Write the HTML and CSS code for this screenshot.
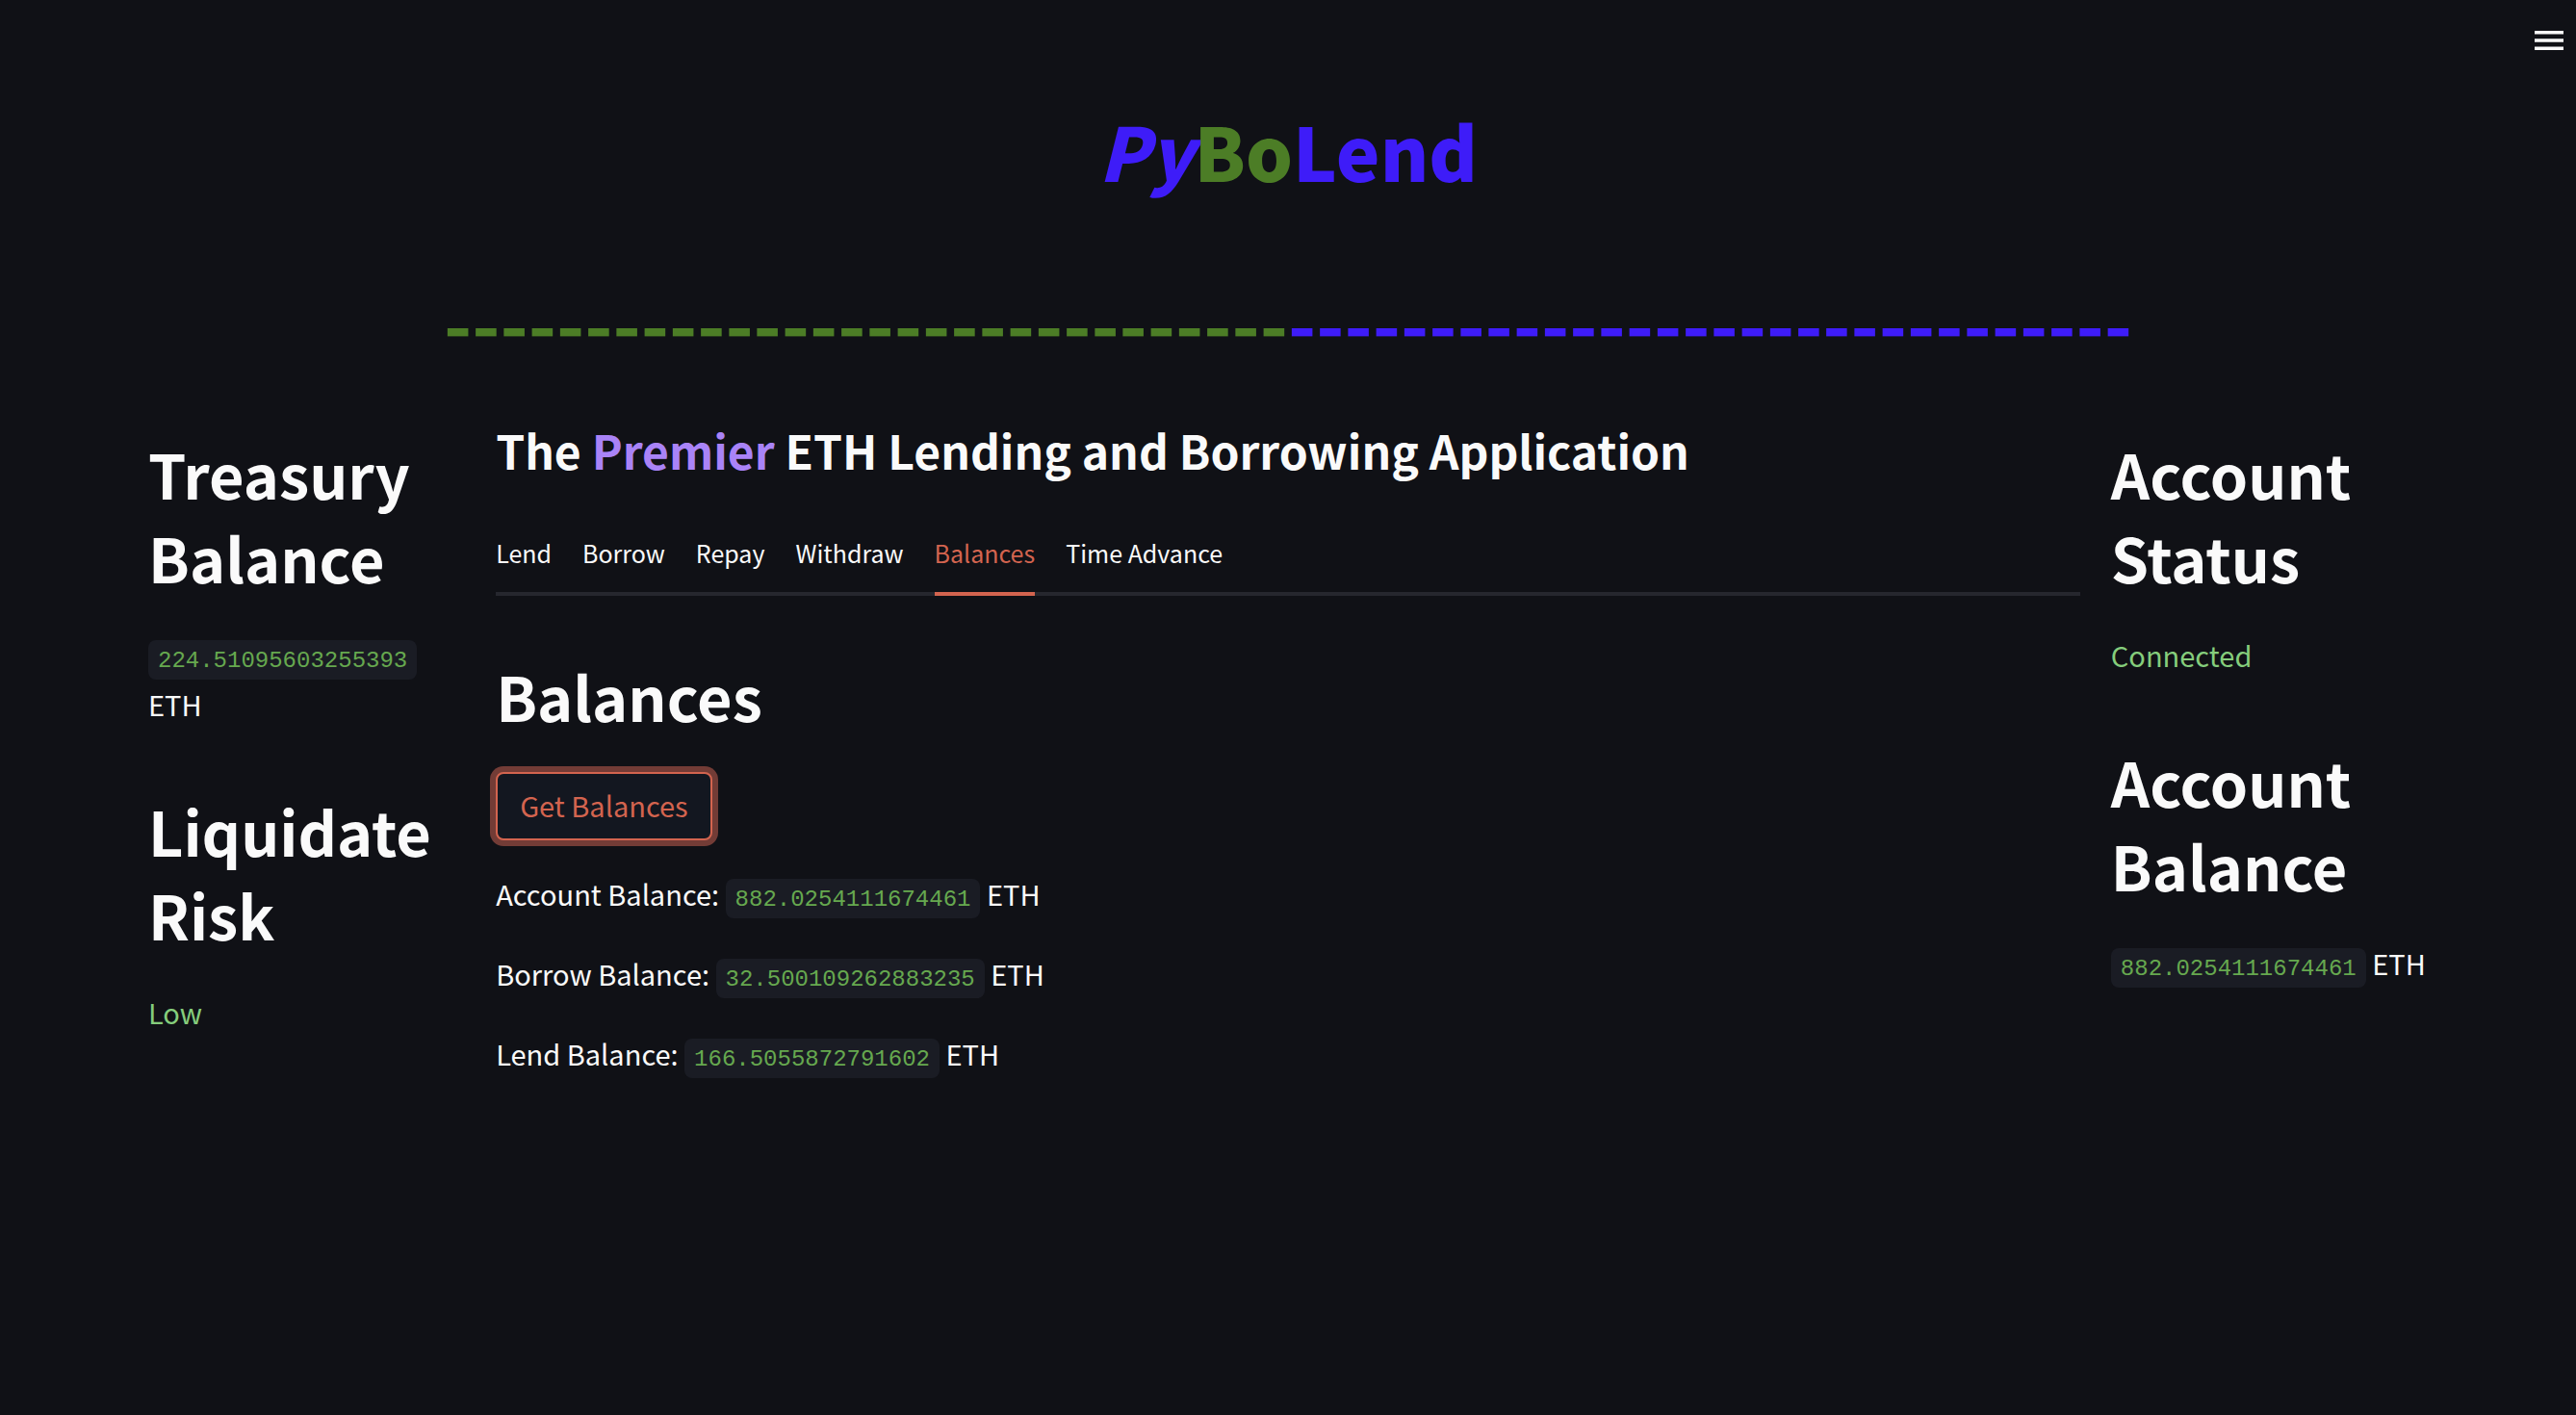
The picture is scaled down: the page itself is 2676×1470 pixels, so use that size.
FILE: index.html
```html
<!DOCTYPE html>
<html lang="en">
<head>
<meta charset="utf-8">
<meta name="viewport" content="width=device-width, initial-scale=1">
<title>PyBoLend</title>
<link rel="stylesheet" href="styles.css">
</head>
<body>
<header class="toolbar">
  <button class="menu-button" type="button" aria-label="Main menu">
    <svg class="menu-icon" viewBox="0 0 30 20" aria-hidden="true"><path d="M0 0h30v3.4H0zM0 8.3h30v3.4H0zM0 16.6h30V20H0z"/></svg>
  </button>
</header>
<main class="page">
  <h1 class="brand"><em class="blue">Py</em><span class="green">Bo</span><span class="blue">Lend</span></h1>
  <div class="rule" aria-hidden="true"><span class="green">------------------------------</span><span class="blue">------------------------------</span></div>
  <div class="columns">
    <aside class="side">
      <section class="stat">
        <h2 class="heading">Treasury Balance</h2>
        <p class="text"><code class="value">224.51095603255393</code> ETH</p>
      </section>
      <section class="stat">
        <h2 class="heading">Liquidate Risk</h2>
        <p class="text good">Low</p>
      </section>
    </aside>
    <section class="center">
      <h2 class="tagline">The <span class="violet">Premier</span> ETH Lending and Borrowing Application</h2>
      <div class="tabs" role="tablist">
        <button class="tab" type="button" role="tab">Lend</button>
        <button class="tab" type="button" role="tab">Borrow</button>
        <button class="tab" type="button" role="tab">Repay</button>
        <button class="tab" type="button" role="tab">Withdraw</button>
        <button class="tab active" type="button" role="tab" aria-selected="true">Balances</button>
        <button class="tab" type="button" role="tab">Time Advance</button>
      </div>
      <div class="panel" role="tabpanel">
        <h2 class="heading">Balances</h2>
        <button class="action" type="button">Get Balances</button>
        <div class="results">
          <p class="text">Account Balance: <code class="value">882.0254111674461</code> ETH</p>
          <p class="text">Borrow Balance: <code class="value">32.500109262883235</code> ETH</p>
          <p class="text">Lend Balance: <code class="value">166.5055872791602</code> ETH</p>
        </div>
      </div>
    </section>
    <aside class="side">
      <section class="stat">
        <h2 class="heading">Account Status</h2>
        <p class="text good">Connected</p>
      </section>
      <section class="stat">
        <h2 class="heading">Account Balance</h2>
        <p class="text"><code class="value">882.0254111674461</code> ETH</p>
      </section>
    </aside>
  </div>
</main>
</body>
</html>
```

FILE: styles.css
```css
* {
  box-sizing: border-box;
}

body {
  margin: 0;
  min-height: 100vh;
  background: #101116;
  color: #fafafa;
  font-family: "Noto Sans CJK SC", "Noto Sans", sans-serif;
  font-size: 29px;
  line-height: 51px;
}

h1, h2, p {
  margin: 0;
}

button {
  border: 0;
  padding: 0;
  background: none;
  color: inherit;
  font: inherit;
  cursor: pointer;
}

.green { color: #4c7d26; }
.blue { color: #3e1cf8; }
.violet { color: #a983f7; }

.toolbar {
  display: flex;
  justify-content: flex-end;
  padding: 32px 13px 0;
}

.menu-button {
  display: flex;
}

.menu-icon {
  width: 30px;
  height: 20px;
  fill: #fafafa;
}

.page {
  padding: 51px 154px;
}

.brand,
.rule {
  line-height: 106px;
  text-align: center;
  white-space: nowrap;
}

.brand {
  font-size: 77px;
  font-weight: 900;
}

.rule {
  margin-top: 72px;
  font-size: 79px;
  font-weight: 700;
}

.columns {
  display: grid;
  grid-template-columns: 1fr 5fr 1fr;
  gap: 32px;
  margin-top: 47px;
}

.side {
  display: flex;
  flex-direction: column;
  gap: 62px;
  min-width: 0;
  padding-top: 14px;
}

.center {
  min-width: 0;
}

.heading {
  font-size: 63px;
  font-weight: 700;
  line-height: 87px;
}

.stat .heading {
  margin-bottom: 33px;
}

.good {
  color: #85cd7c;
}

.value {
  padding: 8px 10px 6px;
  border-radius: 8px;
  background: #1a1c24;
  color: #66a84f;
  font-family: "Liberation Mono", monospace;
  font-size: 24px;
  line-height: 24px;
}

.tagline {
  font-size: 48px;
  font-weight: 700;
  line-height: 67px;
}

.tabs {
  display: flex;
  gap: 32px;
  margin-top: 53px;
  box-shadow: inset 0 -4px #26272e;
}

.tab {
  padding-bottom: 21px;
  border-bottom: 4px solid transparent;
  font-size: 25px;
  line-height: 40px;
}

.tab.active {
  border-color: #d3644f;
  color: #d3644f;
}

.panel {
  padding-top: 60px;
}

.action {
  margin-top: 36px;
  padding: 7px 23px 9px;
  border: 2px solid #d3644f;
  border-radius: 8px;
  background: #131720;
  box-shadow: 0 0 0 6px #733c36;
  color: #d3644f;
}

.results {
  display: flex;
  flex-direction: column;
  gap: 32px;
  margin-top: 30px;
}
```
